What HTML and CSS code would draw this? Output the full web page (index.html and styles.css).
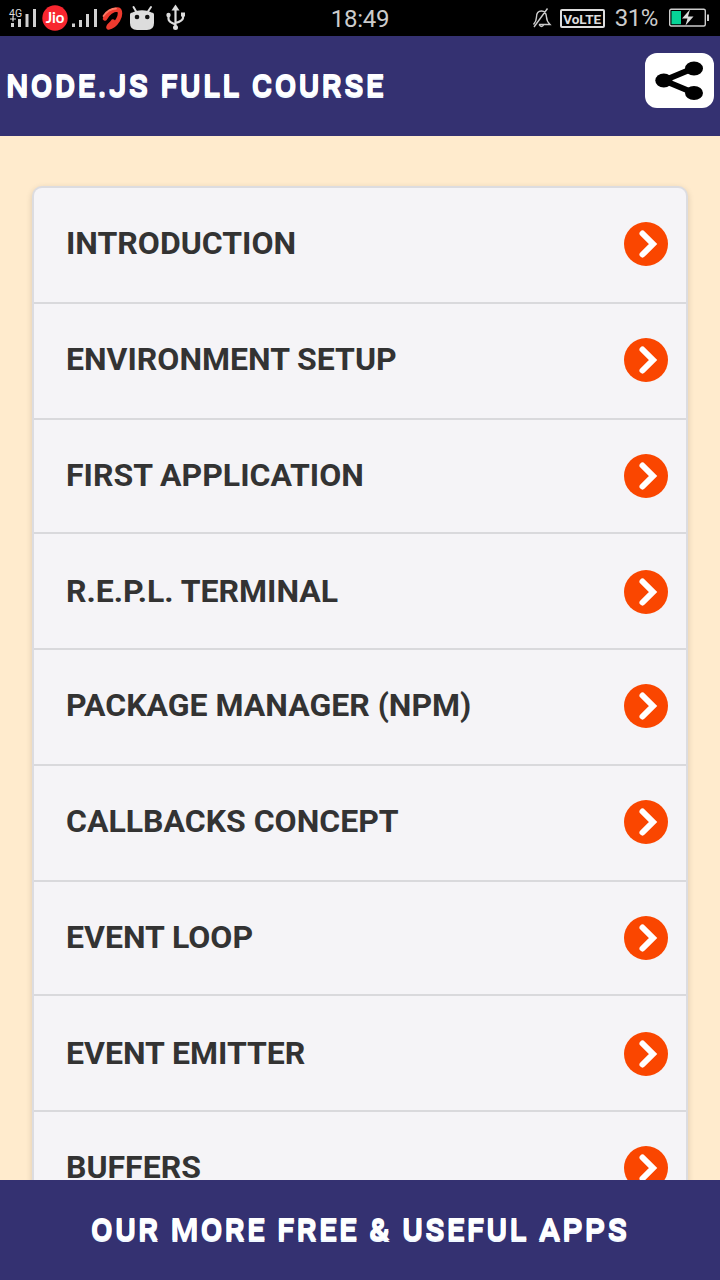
FILE: index.html
```html
<!DOCTYPE html>
<html lang="en">
<head>
    <meta charset="utf-8">
    <title>Node.js Full Course</title>
    <link rel="stylesheet" href="styles.css">
</head>
<body>
    <div class="statusbar">
        <div class="status-left">
            <svg width="190" height="36" viewBox="0 0 190 36">
                <!-- 4G signal -->
                <text x="9" y="17" class="net">4G</text>
                <path d="M10 19h6M13 16.500v5" stroke="#ddd" stroke-width="1.200"/>
                <path d="M12.500 23v4M19.500 19v8M27 14v13M34.500 9v18" stroke="#d0d0d0" stroke-width="3"/>
                <!-- Jio -->
                <circle cx="55" cy="18" r="12.700" fill="#f8262f"/>
                <text x="55" y="23" class="jio">Jio</text>
                <path d="M73.500 23.500v3.500M80.500 20v7M87.500 14v13M95.500 9v18" stroke="#d0d0d0" stroke-width="3"/>
                <!-- Airtel -->
                <path d="M105 18.500C108 13 113 9.500 117.500 9.500C121 10 120.500 16 118 20C115.500 24 111.500 27 108.500 27.500C107.500 26 112 23.500 113 21.500" fill="none" stroke="#ee3a2e" stroke-width="4.500" stroke-linecap="round" stroke-linejoin="round"/>
                <path d="M103.500 16C107 11 112 8.500 116 8.500" fill="none" stroke="#ff7a66" stroke-width="1.800" stroke-linecap="round"/>
                <!-- android head -->
                <path d="M133.500 7L137 13M151 7L147 13" stroke="#ddd" stroke-width="2" stroke-linecap="round"/>
                <path d="M130 14.500Q130 12.500 132.500 12.500L136 11Q142 9.500 148 11L151.500 12.500Q154 12.500 154 14.500V23Q154 30 147 30H137Q130 30 130 23Z" fill="#ddd"/>
                <circle cx="137" cy="17" r="2.300" fill="#111"/>
                <circle cx="147.300" cy="17" r="2.300" fill="#111"/>
                <!-- usb -->
                <path d="M175.500 8V28M168.500 15V19Q168.500 22 175.500 24.500M183 14V18Q182.500 21 175.500 23" fill="none" stroke="#ddd" stroke-width="2.200"/>
                <path d="M175.500 4.500L179.500 10.500H171.500Z" fill="#ddd"/>
                <circle cx="175.500" cy="27.500" r="2.500" fill="#ddd"/>
                <circle cx="168.500" cy="15" r="2.200" fill="#ddd"/>
                <path d="M181 12.500h4v4h-4z" fill="#ddd"/>
            </svg>
        </div>
        <div class="clock">18:49</div>
        <div class="status-right">
            <svg width="22" height="22" viewBox="0 0 22 22" fill="none" stroke="#ccc" stroke-width="1.400">
                <path d="M2.500 17.500Q5.500 14 5.500 10Q5.500 4 10.500 4Q15 4 15.500 10Q15.500 14 19 17.500H8M8 17.500Q10.500 21.500 13 17.500M16.500 1.500L3 20"/>
            </svg>
            <span class="volte">VoLTE</span>
            <span class="percent">31%</span>
            <svg width="41" height="20" viewBox="0 0 41 20">
                <rect x=".700" y="1.200" width="35.600" height="16.800" rx="1.500" fill="none" stroke="#ccc" stroke-width="1.400"/>
                <path d="M2.500 3h9.500v13.200h-9.500z" fill="#06d497"/>
                <path d="M21 1.500L13 10.500H18.500L16.500 17.500L24.500 8.500H19Z" fill="#ddd"/>
                <path d="M38 6.500h2v6.500h-2z" fill="#ccc"/>
            </svg>
        </div>
    </div>

    <div class="header">
        <h1>NODE.JS FULL COURSE</h1>
        <a class="share">
            <svg width="69" height="55" viewBox="0 0 69 55">
                <path d="M19 27.500L49 15M19 27.500L49 40" stroke="#000" stroke-width="5.800"/>
                <ellipse cx="18.800" cy="27.500" rx="8.500" ry="7"/>
                <ellipse cx="49" cy="15.500" rx="9" ry="7"/>
                <ellipse cx="49" cy="40" rx="9" ry="7"/>
            </svg>
        </a>
    </div>

    <div class="content">
        <ul class="listview">
            <li><a>INTRODUCTION</a></li>
            <li><a>ENVIRONMENT SETUP</a></li>
            <li class="short"><a>FIRST APPLICATION</a></li>
            <li><a>R.E.P.L. TERMINAL</a></li>
            <li><a>PACKAGE MANAGER (NPM)</a></li>
            <li><a>CALLBACKS CONCEPT</a></li>
            <li class="short"><a>EVENT LOOP</a></li>
            <li><a>EVENT EMITTER</a></li>
            <li><a>BUFFERS</a></li>
        </ul>
    </div>

    <div class="footer">
        <h1>OUR MORE FREE &amp; USEFUL APPS</h1>
    </div>

    <script>
        // same arrow on every row
        document.querySelectorAll('.listview li').forEach(function(li) {
            li.insertAdjacentHTML('beforeend',
                '<svg class="arrow" width="44" height="44" viewBox="0 0 44 44">' +
                '<circle cx="22" cy="22" r="22" fill="#fa4600"/>' +
                '<path d="M18.500 11.500L29 22L18.500 32.500" fill="none" stroke="#fff" stroke-width="6" stroke-linecap="round"/>' +
                '</svg>');
        });
    </script>
</body>
</html>
```

FILE: styles.css
```css
* {
    box-sizing: border-box;
}
body {
    margin: 0;
    height: 1280px;
    display: flex;
    flex-direction: column;
    overflow: hidden;
    background: #ffebcd;
    font-family: Roboto, sans-serif;
}
.statusbar {
    flex: none;
    height: 36px;
    display: flex;
    justify-content: space-between;
    background: #000;
    color: #ccc;
}
.status-left, .status-right {
    width: 300px;
    display: flex;
    align-items: center;
}
.status-right {
    justify-content: flex-end;
    padding-right: 10px;
}
.net {
    font-size: 10.5px;
    fill: #ddd;
}
.jio {
    font: bold 15px Lato, sans-serif;
    fill: #fff;
    text-anchor: middle;
}
.clock {
    font-size: 24px;
    letter-spacing: -0.3px;
    line-height: 38px;
}
.volte {
    width: 45px;
    height: 19px;
    margin: 0 10px 0 7px;
    border: 2px solid #ddd;
    border-radius: 2px;
    color: #ddd;
    font-size: 13.5px;
    font-weight: bold;
    line-height: 16px;
    text-align: center;
}
.percent {
    margin-right: 11px;
    font-size: 24px;
    letter-spacing: -0.4px;
}
.header, .footer {
    flex: none;
    height: 100px;
    display: flex;
    align-items: center;
    padding-bottom: 2px;
    background: #343171;
}
.header {
    justify-content: space-between;
    padding-left: 6px;
    padding-right: 6px;
}
h1 {
    margin: 0;
    color: #fff;
    font-size: 32px;
    letter-spacing: 2px;
    line-height: 40px;
    text-shadow: 0 2px 0 #f0f8ff;
    white-space: nowrap;
}
.share {
    height: 55px;
    margin-bottom: 10px;
    border-radius: 12px;
    background: #fff;
}
.content {
    flex: 1;
    min-height: 0;
    padding: 50px 32px 0;
    overflow: hidden;
}
.listview {
    margin: 0;
    padding: 0;
    list-style: none;
    border: 2px solid #dcdce0;
    border-bottom: none;
    border-radius: 10px 10px 0 0;
    background: #f5f4f7;
    box-shadow: 0 2px 6px rgba(0, 0, 0, 0.15);
}
.listview li {
    height: 116px;
    display: flex;
    align-items: flex-start;
    justify-content: space-between;
    padding: 34px 18px 0 32px;
    border-bottom: 2px solid #d9d9dc;
    color: #333;
    font-size: 32px;
    font-weight: bold;
    line-height: 42px;
    white-space: nowrap;
}
.listview .short {
    height: 114px;
}
.listview .short + li {
    padding-top: 36px;
}
.footer {
    justify-content: center;
}
```
